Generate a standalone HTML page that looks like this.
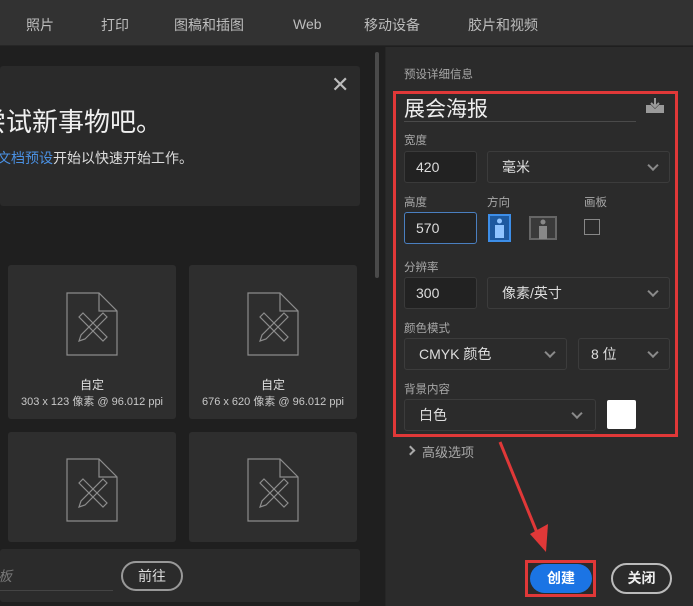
<!DOCTYPE html>
<html><head><meta charset="utf-8"><style>
*{margin:0;padding:0;box-sizing:border-box}
body{width:693px;height:606px;overflow:hidden;background:#1f1f1f;font-family:"Liberation Sans","Noto Sans CJK SC",sans-serif;color:#ccc;position:relative}
.a{position:absolute}
.top{left:0;top:0;width:693px;height:46px;background:#323232;border-bottom:1px solid #262626}
.top span{position:absolute;top:15px;font-size:14px;color:#bdbdbd}
.right{left:385px;top:47px;width:308px;height:559px;background:#2b2b2b;border-left:1px solid #262626}
.lbl{font-size:11.5px;color:#a8a8a8}
.fld{background:#222;border:1px solid #3a3a3a;border-radius:3px;font-size:14px;color:#ddd;padding-left:11px;display:flex;align-items:center}
.dd{background:#2b2b2b;border:1px solid #3c3c3c;border-radius:3px;font-size:14px;color:#ddd;padding-left:14px;display:flex;align-items:center}
.chev{position:absolute;right:12px;top:50%;width:8px;height:8px;border-right:2px solid #8a8a8a;border-bottom:2px solid #8a8a8a;transform:translateY(-70%) rotate(45deg)}
.card{background:#2e2e2e;border-radius:3px}
.cap{position:absolute;width:100%;text-align:center;font-size:11px;color:#c8c8c8}
</style></head><body>
<div class="a top">
<span style="left:26px">照片</span><span style="left:101px">打印</span><span style="left:174px">图稿和插图</span><span style="left:293px;top:16px">Web</span><span style="left:364px">移动设备</span><span style="left:468px">胶片和视频</span>
</div>
<div class="a" style="left:375px;top:52px;width:4px;height:226px;background:#4a4a4a;border-radius:2px"></div>
<div class="a" style="left:0;top:66px;width:360px;height:140px;background:#2a2a2a;border-radius:3px"></div>
<div class="a" style="left:-20px;top:102px;font-size:26px;color:#f0f0f0">尝试新事物吧。</div>
<div class="a" style="left:-3px;top:148px;font-size:14px;color:#ddd"><span style="color:#4a90e2">文档预设</span>开始以快速开始工作。</div>
<div class="a" style="left:331px;top:72px;font-size:22px;color:#bbb">✕</div>

<svg width="0" height="0" style="position:absolute"><defs><g id="doc" fill="none" stroke="#8c8c8c" stroke-width="1.2"><path d="M0 0H32L50 18V62H0Z"/><path d="M32 0V18H50"/>
<path d="M16 20L40 44L36 48L12 24Z"/><path d="M36 20L40 24L18 46L12 48L14 42Z"/></g></defs></svg>
<div class="a card" style="left:8px;top:265px;width:168px;height:154px">
<svg class="a" style="left:58px;top:27px" width="54" height="66"><use href="#doc" x="1" y="1"/></svg>
<div class="cap" style="top:111px;font-size:12px;color:#e0e0e0">自定</div>
<div class="cap" style="top:128px">303 x 123 像素 @ 96.012 ppi</div></div>
<div class="a card" style="left:189px;top:265px;width:168px;height:154px">
<svg class="a" style="left:58px;top:27px" width="54" height="66"><use href="#doc" x="1" y="1"/></svg>
<div class="cap" style="top:111px;font-size:12px;color:#e0e0e0">自定</div>
<div class="cap" style="top:128px">676 x 620 像素 @ 96.012 ppi</div></div>
<div class="a card" style="left:8px;top:432px;width:168px;height:110px">
<svg class="a" style="left:58px;top:26px" width="54" height="66"><use href="#doc" x="1" y="1"/></svg></div>
<div class="a card" style="left:189px;top:432px;width:168px;height:110px">
<svg class="a" style="left:58px;top:26px" width="54" height="66"><use href="#doc" x="1" y="1"/></svg></div>
<div class="a" style="left:0;top:549px;width:360px;height:53px;background:#2b2b2b;border-radius:3px"></div>
<div class="a" style="left:-2px;top:566px;font-size:14px;color:#777;font-style:italic">板</div>
<div class="a" style="left:0;top:590px;width:113px;height:1px;background:#444"></div>
<div class="a" style="left:121px;top:561px;width:62px;height:30px;border:2px solid #999;border-radius:15px;font-size:14px;color:#ddd;text-align:center;line-height:26px">前往</div>

<div class="a right"></div>
<div class="a lbl" style="left:404px;top:66px">预设详细信息</div>
<div class="a" style="left:393px;top:91px;width:285px;height:346px;border:3px solid #e03838"></div>
<div class="a" style="left:404px;top:93px;font-size:21px;color:#eee">展会海报</div>
<div class="a" style="left:404px;top:121px;width:232px;height:1px;background:#4a4a4a"></div>
<svg class="a" style="left:644px;top:97px" width="22" height="17"><path d="M2 8v8h18V8h-5l-4 4-4-4z" fill="#9a9a9a"/><path d="M11 1v9M7 6l4 4 4-4" stroke="#9a9a9a" stroke-width="2" fill="none"/></svg>
<div class="a lbl" style="left:404px;top:132px">宽度</div>
<div class="a fld" style="left:404px;top:151px;width:73px;height:32px">420</div>
<div class="a dd" style="left:487px;top:151px;width:183px;height:32px">毫米<i class="chev"></i></div>
<div class="a lbl" style="left:404px;top:194px">高度</div>
<div class="a lbl" style="left:487px;top:194px">方向</div>
<div class="a lbl" style="left:584px;top:194px">画板</div>
<div class="a fld" style="left:404px;top:212px;width:73px;height:32px;border-color:#4a7fc0">570</div>
<div class="a" style="left:488px;top:214px;width:23px;height:28px;border:2px solid #3d8ee8;background:#1e5aa0"></div>
<svg class="a" style="left:492px;top:217px" width="15" height="22"><circle cx="7.5" cy="4" r="2.5" fill="#8fc4ff"/><rect x="3" y="8" width="9" height="13" fill="#8fc4ff"/></svg>
<div class="a" style="left:529px;top:216px;width:28px;height:24px;border:2px solid #666;background:#3a3a3a"></div>
<svg class="a" style="left:537px;top:219px" width="12" height="20"><circle cx="6" cy="3" r="2.5" fill="#888"/><rect x="2" y="7" width="8" height="13" fill="#888"/></svg>
<div class="a" style="left:584px;top:219px;width:16px;height:16px;border:1.5px solid #888"></div>
<div class="a lbl" style="left:404px;top:259px">分辨率</div>
<div class="a fld" style="left:404px;top:277px;width:73px;height:32px">300</div>
<div class="a dd" style="left:487px;top:277px;width:183px;height:32px">像素/英寸<i class="chev"></i></div>
<div class="a lbl" style="left:404px;top:320px">颜色模式</div>
<div class="a dd" style="left:404px;top:338px;width:163px;height:32px">CMYK 颜色<i class="chev"></i></div>
<div class="a dd" style="left:578px;top:338px;width:92px;height:32px;padding-left:12px">8 位<i class="chev"></i></div>
<div class="a lbl" style="left:404px;top:381px">背景内容</div>
<div class="a dd" style="left:404px;top:399px;width:192px;height:32px">白色<i class="chev" style="right:14px"></i></div>
<div class="a" style="left:607px;top:400px;width:29px;height:29px;background:#fff;border-radius:2px"></div>
<div class="a" style="left:407px;top:447px;width:7px;height:7px;border-right:2px solid #aaa;border-bottom:2px solid #aaa;transform:rotate(-45deg)"></div>
<div class="a lbl" style="left:422px;top:442px;font-size:13px">高级选项</div>
<svg class="a" style="left:490px;top:440px" width="70" height="120"><path d="M10 2L50 100" stroke="#e03838" stroke-width="3"/><path d="M40 94L56 112L58 84Z" fill="#e03838"/></svg>
<div class="a" style="left:525px;top:560px;width:71px;height:37px;border:3px solid #e03838"></div>
<div class="a" style="left:530px;top:564px;width:62px;height:29px;background:#1b74e4;border-radius:15px;color:#fff;font-size:14px;font-weight:bold;text-align:center;line-height:29px">创建</div>
<div class="a" style="left:611px;top:563px;width:61px;height:31px;border:2px solid #bbb;border-radius:16px;color:#eee;font-size:14px;font-weight:bold;text-align:center;line-height:27px">关闭</div>
</body></html>
